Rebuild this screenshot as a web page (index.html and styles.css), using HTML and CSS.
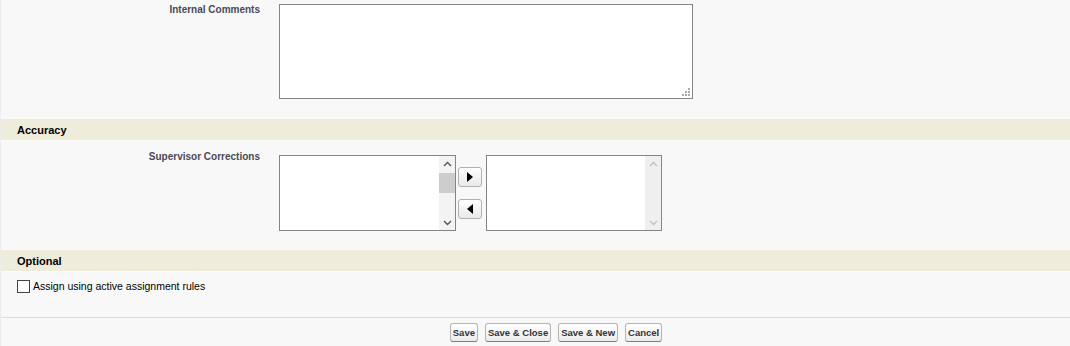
FILE: index.html
```html
<!DOCTYPE html>
<html lang="en">
<head>
    <meta charset="UTF-8">
    <title>Case Edit</title>
    <link rel="stylesheet" href="styles.css">
</head>
<body>
    <div class="page">
        <!-- Internal comments -->
        <div class="row first">
            <label class="label" for="comments">Internal Comments</label>
            <div class="field">
                <div class="area-wrap">
                    <textarea id="comments" class="area"></textarea>
                    <svg class="grip" width="8" height="8" viewBox="0 0 8 8">
                        <rect x="6" y="0" width="2" height="2" fill="#a9a9a9"/>
                        <rect x="3" y="3" width="2" height="2" fill="#a9a9a9"/>
                        <rect x="6" y="3" width="2" height="2" fill="#a9a9a9"/>
                        <rect x="0" y="6" width="2" height="2" fill="#a9a9a9"/>
                        <rect x="3" y="6" width="2" height="2" fill="#a9a9a9"/>
                        <rect x="6" y="6" width="2" height="2" fill="#a9a9a9"/>
                    </svg>
                </div>
            </div>
        </div>

        <!-- Accuracy -->
        <div class="subheader">Accuracy</div>
        <div class="row second">
            <span class="label">Supervisor Corrections</span>
            <div class="field picklist">
                <div class="listbox">
                    <div class="options"></div>
                    <div class="scroll">
                        <svg class="chev" width="9" height="6" viewBox="0 0 9 6"><polyline points="1,5 4.5,1.5 8,5" fill="none" stroke="#555" stroke-width="1.4"/></svg>
                        <div class="track"><div class="thumb"></div></div>
                        <svg class="chev" width="9" height="6" viewBox="0 0 9 6"><polyline points="1,1 4.5,4.5 8,1" fill="none" stroke="#555" stroke-width="1.4"/></svg>
                    </div>
                </div>
                <div class="movers">
                    <button class="mover" title="Add">
                        <svg width="6" height="10" viewBox="0 0 6 10"><polygon points="0,0 6,5 0,10" fill="#000"/></svg>
                    </button>
                    <button class="mover" title="Remove">
                        <svg width="6" height="10" viewBox="0 0 6 10"><polygon points="6,0 0,5 6,10" fill="#000"/></svg>
                    </button>
                </div>
                <div class="listbox narrow">
                    <div class="options"></div>
                    <div class="scroll off">
                        <svg class="chev" width="9" height="6" viewBox="0 0 9 6"><polyline points="1,5 4.5,1.5 8,5" fill="none" stroke="#c2c2c2" stroke-width="1.4"/></svg>
                        <div class="track"></div>
                        <svg class="chev" width="9" height="6" viewBox="0 0 9 6"><polyline points="1,1 4.5,4.5 8,1" fill="none" stroke="#c2c2c2" stroke-width="1.4"/></svg>
                    </div>
                </div>
            </div>
        </div>

        <!-- Optional -->
        <div class="subheader">Optional</div>
        <div class="check-row">
            <input type="checkbox" id="assign" class="check">
            <label for="assign">Assign using active assignment rules</label>
        </div>

        <div class="bottom-buttons">
            <button class="btn">Save</button>
            <button class="btn">Save &amp; Close</button>
            <button class="btn">Save &amp; New</button>
            <button class="btn">Cancel</button>
        </div>
    </div>
</body>
</html>
```

FILE: styles.css
```css
body {
    margin: 0;
    font-family: "Liberation Sans", Arial, sans-serif;
    background: #f8f8f8;
    color: #000;
}
.page {
    border-left: 1px solid #ececec;
    height: 346px;
    overflow: hidden;
}
.row {
    display: grid;
    grid-template-columns: 259px 1fr;
    column-gap: 19px;
}
.row.first {
    padding-top: 4px;
    height: 114px;
}
.row.second {
    padding-top: 14px;
    height: 94px;
}
.label {
    text-align: right;
    font-size: 10px;
    font-weight: bold;
    color: #4a4a56;
}
.row.second .label { margin-top: -4px; }
.area-wrap {
    position: relative;
    width: 414px;
    height: 95px;
}
.area {
    box-sizing: border-box;
    width: 414px;
    height: 95px;
    margin: 0;
    border: 1px solid #858585;
    background: #fff;
    resize: none;
    outline: none;
}
.grip {
    position: absolute;
    right: 3px;
    bottom: 3px;
}
.subheader {
    background: #eeecda;
    border-top: 1px solid #fbfbf5;
    border-bottom: 1px solid #fcfcf8;
    height: 21px;
    line-height: 22px;
    padding-left: 16px;
    font-size: 11px;
    font-weight: bold;
    color: #000;
}
.picklist {
    display: flex;
    align-items: flex-start;
    gap: 3px;
}
.listbox {
    box-sizing: border-box;
    width: 177px;
    height: 76px;
    border: 1px solid #858585;
    background: #fff;
    display: flex;
}
.listbox.narrow { width: 176px; }
.options { flex: 1; }
.scroll {
    width: 16px;
    background: #f3f3f3;
    display: flex;
    flex-direction: column;
    align-items: center;
    padding: 5px 0 4px;
}
.scroll .track {
    flex: 1;
    align-self: stretch;
    padding-top: 6px;
}
.thumb {
    height: 20px;
    background: #cdcdcd;
}
.scroll.off { background: #efefef; }
.movers {
    display: flex;
    flex-direction: column;
    gap: 12px;
    padding-top: 12px;
    margin: 0 1px 0 -1px;
}
.mover {
    box-sizing: border-box;
    width: 24px;
    height: 20px;
    padding: 0;
    border: 1px solid #b0b0b0;
    border-radius: 3px;
    background: linear-gradient(#ffffff, #e9e9e9);
    display: flex;
    align-items: center;
    justify-content: center;
}
.check-row {
    display: flex;
    align-items: center;
    gap: 3px;
    padding: 8px 0 0 16px;
    height: 37px;
    border-bottom: 1px solid #dcdcdc;
    font-size: 10.5px;
    box-sizing: content-box;
}
.check {
    appearance: none;
    box-sizing: border-box;
    width: 13px;
    height: 13px;
    margin: 0;
    border: 1px solid #444;
    background: #fff;
    align-self: flex-start;
}
.check-row label {
    align-self: flex-start;
    line-height: 13px;
}
.bottom-buttons {
    display: flex;
    justify-content: center;
    gap: 7px;
    padding: 5px 0 0 41px;
}
.btn {
    font-family: "Liberation Sans", Arial, sans-serif;
    font-size: 9.5px;
    font-weight: bold;
    color: #333;
    height: 19px;
    padding: 0 2px;
    border: 1px solid #b5b5b5;
    border-bottom-color: #7f7f7f;
    border-radius: 3px;
    background: linear-gradient(#ffffff, #ececec);
}
```
